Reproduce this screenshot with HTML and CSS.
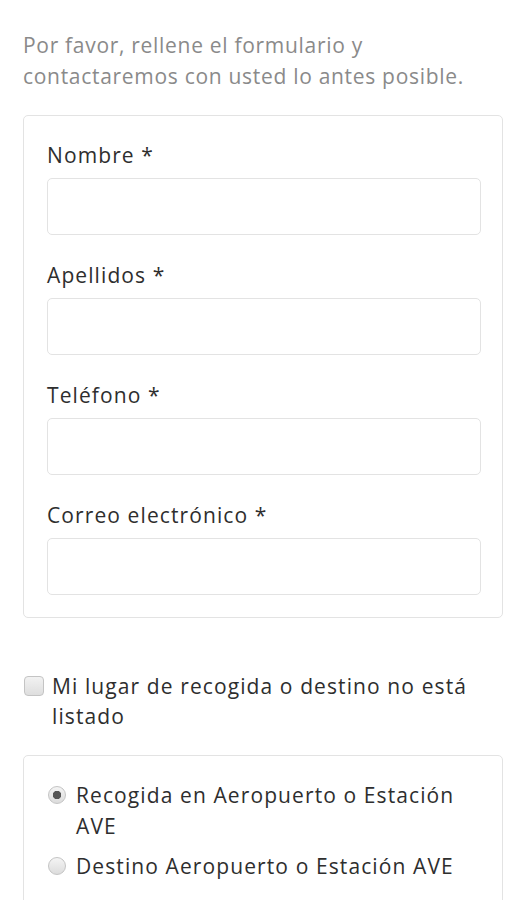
FILE: index.html
```html
<!DOCTYPE html>
<html lang="es">
<head>
  <meta charset="UTF-8" />
  <meta name="viewport" content="width=device-width, initial-scale=1.0"/>
  <title>Contacto</title>
  <link rel="stylesheet" href="styles.css">
</head>
<body>
  <main class="page">
    <p class="intro">Por favor, rellene el formulario y contactaremos con usted lo antes posible.</p>

    <!-- Datos personales -->
    <section class="card">
      <div class="field">
        <label for="nombre">Nombre *</label>
        <input type="text" id="nombre">
      </div>
      <div class="field">
        <label for="apellidos">Apellidos *</label>
        <input type="text" id="apellidos">
      </div>
      <div class="field">
        <label for="telefono">Teléfono *</label>
        <input type="tel" id="telefono">
      </div>
      <div class="field">
        <label for="correo">Correo electrónico *</label>
        <input type="email" id="correo">
      </div>
    </section>

    <label class="check">
      <input type="checkbox" id="noListado">
      <span>Mi lugar de recogida o destino no está listado</span>
    </label>

    <!-- Tipo de trayecto -->
    <section class="card options">
      <label class="option">
        <input type="radio" name="tipo" checked>
        <span>Recogida en Aeropuerto o Estación AVE</span>
      </label>
      <label class="option">
        <input type="radio" name="tipo">
        <span>Destino Aeropuerto o Estación AVE</span>
      </label>
    </section>
  </main>
</body>
</html>
```

FILE: styles.css
```css
:root {
  --fg: #2e2e2e;
  --muted: #8a8a8a;
  --border: #e3e3e3;
}

* {
  box-sizing: border-box;
}

body {
  margin: 0;
  font-family: 'Open Sans', 'Liberation Sans', sans-serif;
  font-size: 21px;
  letter-spacing: 1.1px;
  color: var(--fg);
  background: #fff;
}

.page {
  padding: 30px 24px 0 23px;
}

.intro {
  margin: 0 0 23px;
  line-height: 31px;
  letter-spacing: 0.7px;
  color: var(--muted);
}

.card {
  border: 1px solid var(--border);
  border-radius: 5px;
  padding: 24px 21px 22px 23px;
}

.field {
  margin-bottom: 25px;
}

.field:last-child {
  margin-bottom: 0;
}

.field label {
  display: block;
  line-height: 30px;
  margin-bottom: 8px;
}

.field input {
  display: block;
  width: 100%;
  height: 57px;
  border: 1px solid var(--border);
  border-radius: 5px;
  font: inherit;
  padding: 0 12px;
}

.check {
  display: flex;
  align-items: flex-start;
  margin: 53px 0 24px;
  line-height: 30px;
}

.check input {
  appearance: none;
  flex: none;
  width: 20px;
  height: 20px;
  margin: 5px 8px 0 1px;
  border: 1px solid #c4c4c4;
  border-radius: 4px;
  background: linear-gradient(#f2f2f2, #dedede);
}

.options {
  padding: 24px 21px 14px 24px;
}

.option {
  display: flex;
  align-items: flex-start;
  line-height: 31px;
  margin-bottom: 9px;
}

.option input {
  appearance: none;
  flex: none;
  width: 18px;
  height: 18px;
  margin: 6px 10px 0 0;
  border: 1px solid #c4c4c4;
  border-radius: 50%;
  background: linear-gradient(#f4f4f4, #dcdcdc);
}

.option input:checked {
  background: radial-gradient(circle, #555 0 4px, transparent 4.5px), linear-gradient(#f4f4f4, #dcdcdc);
}
```
